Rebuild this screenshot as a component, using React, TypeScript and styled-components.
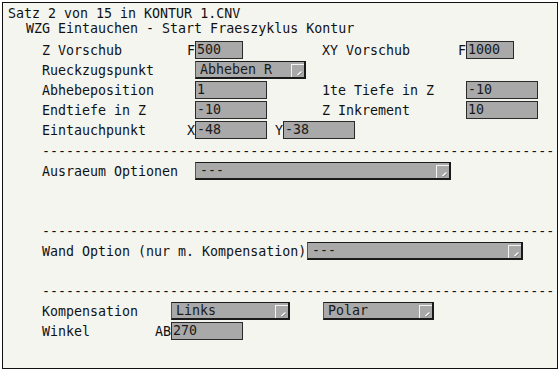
import React from 'react';
import styled, { createGlobalStyle } from 'styled-components';

const GlobalStyle = createGlobalStyle`
  body {
    margin: 0;
    background: #ffffff;
  }
`;

const Panel = styled.div`
  box-sizing: border-box;
  width: 556px;
  height: 367px;
  margin: 2px 0 0 2px;
  padding: 3px 5px 0 5px;
  border: 1px solid #111;
  background: #f5f5f0;
  color: #111;
  font-family: 'DejaVu Sans Mono', 'Liberation Mono', monospace;
  font-size: 13.3px;
`;

const HeaderLine = styled.div<{ $indent?: number }>`
  height: 15px;
  line-height: 15px;
  padding-left: ${p => p.$indent || 0}px;
  white-space: pre;
`;

const Body = styled.div`
  margin-top: 4px;
  padding-left: 34px;
`;

const Row = styled.div`
  display: flex;
  align-items: center;
  height: 20px;
  white-space: pre;
`;

const Blank = styled.div<{ $rows: number }>`
  height: ${p => p.$rows * 20}px;
`;

const Label = styled.span<{ $w: number }>`
  flex: none;
  width: ${p => p.$w}px;
`;

const Prefix = styled.span<{ $w?: number }>`
  flex: none;
  width: ${p => p.$w || 8}px;
  text-align: right;
`;

const Slot = styled.div<{ $w?: number }>`
  display: flex;
  align-items: center;
  flex: none;
  width: ${p => (p.$w ? `${p.$w}px` : 'auto')};
`;

const Field = styled.div<{ $w: number }>`
  box-sizing: border-box;
  flex: none;
  width: ${p => p.$w}px;
  height: 18px;
  line-height: 16px;
  padding-left: 1px;
  border: 1px solid #2a2a2a;
  background: #a9a9a9;
  color: #1a1a1a;
`;

const Dropdown = styled.div<{ $w: number; $gap?: number }>`
  box-sizing: border-box;
  display: flex;
  flex: none;
  width: ${p => p.$w}px;
  height: 18px;
  margin-left: ${p => p.$gap || 0}px;
  border: 1px solid #1a1a1a;
  border-right-width: 2px;
  border-bottom-width: 2px;
  border-left-color: #555;
  background: #a9a9a9;
  color: #1a1a1a;
`;

const DropText = styled.span`
  flex: 1;
  padding-left: 4px;
  line-height: 15px;
  overflow: hidden;
`;

const DropButton = styled.span`
  box-sizing: border-box;
  display: flex;
  flex: none;
  width: 13px;
  height: 13px;
  margin-top: 2px;
  border-left: 1px solid #f4f4f4;
  border-top: 1px solid #f4f4f4;
  background: #a9a9a9;
`;

const Rule = styled(Row)<{ $lead?: number }>`
  margin-top: ${p => p.$lead || 0}px;
`;

const Select: React.FC<{ w: number; value: string; gap?: number }> = ({ w, value, gap }) => (
  <Dropdown $w={w} $gap={gap}>
    <DropText>{value}</DropText>
    <DropButton>
      <svg width="12" height="12" viewBox="0 0 12 12">
        <line x1="6" y1="10.5" x2="10" y2="7" stroke="#7e7e7e" strokeWidth="1.8" />
        <line x1="5.5" y1="10" x2="9.5" y2="6.5" stroke="#ffffff" strokeWidth="1.4" />
      </svg>
    </DropButton>
  </Dropdown>
);

const dashes = '-'.repeat(64);

const App: React.FC = () => (
  <>
    <GlobalStyle />
    <Panel>
      <HeaderLine>Satz 2 von 15 in KONTUR 1.CNV</HeaderLine>
      <HeaderLine $indent={18}>WZG Eintauchen - Start Fraeszyklus Kontur</HeaderLine>
      <Body>
        <Row>
          <Label $w={145}>Z Vorschub</Label>
          <Prefix>F</Prefix>
          <Slot $w={127}><Field $w={48}>500</Field></Slot>
          <Label $w={136}>XY Vorschub</Label>
          <Prefix>F</Prefix>
          <Field $w={48}>1000</Field>
        </Row>
        <Row>
          <Label $w={145}>Rueckzugspunkt</Label>
          <Prefix />
          <Slot $w={127}><Select w={111} value="Abheben R" /></Slot>
        </Row>
        <Row>
          <Label $w={145}>Abhebeposition</Label>
          <Prefix />
          <Slot $w={127}><Field $w={72}>1</Field></Slot>
          <Label $w={136}>1te Tiefe in Z</Label>
          <Prefix />
          <Field $w={72}>-10</Field>
        </Row>
        <Row>
          <Label $w={145}>Endtiefe in Z</Label>
          <Prefix />
          <Slot $w={127}><Field $w={72}>-10</Field></Slot>
          <Label $w={136}>Z Inkrement</Label>
          <Prefix />
          <Field $w={72}>10</Field>
        </Row>
        <Row>
          <Label $w={145}>Eintauchpunkt</Label>
          <Prefix>X</Prefix>
          <Slot>
            <Field $w={72}>-48</Field>
            <Prefix $w={16}>Y</Prefix>
            <Field $w={72}>-38</Field>
          </Slot>
        </Row>
        <Rule $lead={1}>{dashes}</Rule>
        <Row>
          <Label $w={153}>Ausraeum Optionen</Label>
          <Select w={256} value="---" />
        </Row>
        <Blank $rows={2} />
        <Rule>{dashes}</Rule>
        <Row>
          <Label $w={265}>Wand Option (nur m. Kompensation)</Label>
          <Select w={216} value="---" />
        </Row>
        <Blank $rows={1} />
        <Rule>{dashes}</Rule>
        <Row>
          <Label $w={129}>Kompensation</Label>
          <Select w={119} value="Links" />
          <Select w={111} value="Polar" gap={33} />
        </Row>
        <Row>
          <Label $w={113}>Winkel</Label>
          <Prefix $w={16}>AB</Prefix>
          <Field $w={72}>270</Field>
        </Row>
      </Body>
    </Panel>
  </>
);

export default App;
